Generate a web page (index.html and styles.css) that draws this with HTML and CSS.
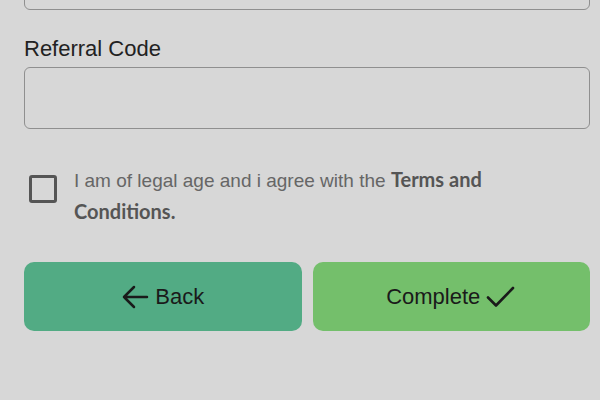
FILE: index.html
```html
<!DOCTYPE html>
<html>
<head>
<meta charset="utf-8">
<link rel="stylesheet" href="styles.css">
</head>
<body>
<div class="form">
  <div class="input input-top"></div>
  <label class="label">Referral Code</label>
  <div class="input"></div>
  <div class="agree">
    <span class="checkbox"></span>
    <p class="agree-text"><span>I am of legal age and i agree with the</span> <b>Terms and</b> <b>Conditions.</b></p>
  </div>
  <div class="buttons">
    <button class="btn btn-back">
      <svg width="28" height="26" viewBox="0 0 28 26"><path d="M26 13H3M13 3L3 13L13 23" fill="none" stroke="#1a1a1a" stroke-width="2.5" stroke-linecap="round" stroke-linejoin="round"/></svg>
      <span>Back</span>
    </button>
    <button class="btn btn-complete">
      <span>Complete</span>
      <svg width="30" height="26" viewBox="0 0 30 26"><path d="M2 13.5L10 21.5L27 4" fill="none" stroke="#1a1a1a" stroke-width="2.6" stroke-linecap="round" stroke-linejoin="round"/></svg>
    </button>
  </div>
</div>
</body>
</html>
```
FILE: styles.css
```css
html, body {
  margin: 0;
  padding: 0;
  background: #d7d7d7;
  font-family: "Liberation Sans", Arial, sans-serif;
}
.form {
  padding: 0 10px 0 24px;
  display: flex;
  flex-direction: column;
}
.input {
  height: 60px;
  border: 1.5px solid #8f8f8f;
  border-radius: 6px;
  background: #d7d7d7;
}
.input-top {
  margin-top: -52px;
}
.label {
  margin-top: 26px;
  margin-bottom: 6px;
  font-size: 22px;
  line-height: 25px;
  color: #222;
}
.agree {
  display: flex;
  align-items: flex-start;
  margin-top: 35px;
  gap: 17px;
  padding-left: 5px;
}
.checkbox {
  flex: none;
  width: 22px;
  height: 22px;
  border: 3px solid #555;
  border-radius: 3px;
  margin-top: 11px;
}
.agree-text {
  margin: 0;
  max-width: 470px;
  font-size: 19px;
  line-height: 31px;
  color: #666;
}
.agree-text b {
  font-family: Lato, "Liberation Sans", sans-serif;
  font-weight: 700;
  color: #555;
  font-size: 20px;
  line-height: 31px;
}
.buttons {
  display: flex;
  gap: 11px;
  margin-top: 34px;
}
.btn {
  flex: 1;
  height: 69px;
  border: none;
  border-radius: 10px;
  display: flex;
  align-items: center;
  justify-content: center;
  gap: 6px;
  font-family: "Liberation Sans", Arial, sans-serif;
  font-size: 22px;
  color: #1a1a1a;
  padding: 0;
}
.btn-back {
  background: #52ab84;
}
.btn-complete {
  background: #74bf6b;
}
```
